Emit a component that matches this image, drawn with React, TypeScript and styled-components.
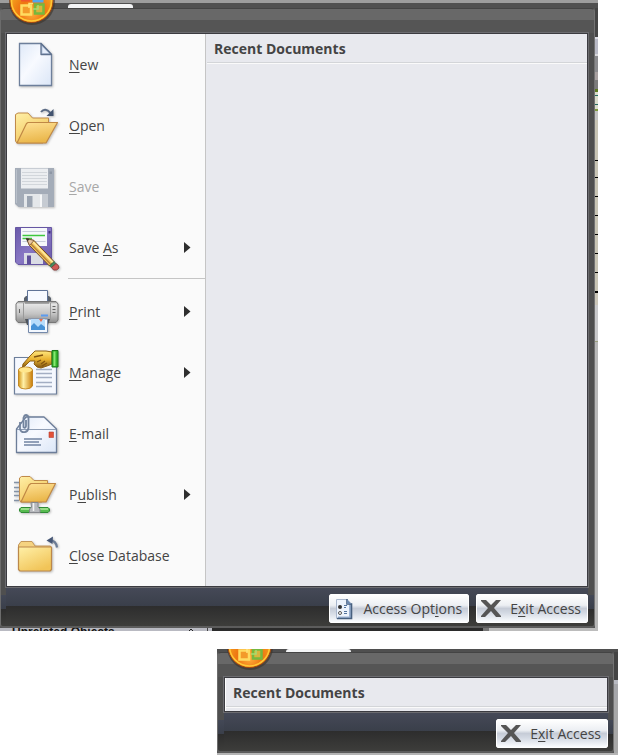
import React from "react";
import styled, { createGlobalStyle } from "styled-components";

const GlobalStyle = createGlobalStyle`
  *, *::before, *::after { box-sizing: border-box; }
  body {
    margin: 0;
    background: #fff;
    color: #444;
    font: 400 14px/20px "Open Sans", "Noto Sans", sans-serif;
  }
`;

const Page = styled.main`
  display: flex;
  flex-direction: column;
  gap: 18px;
`;

const Backdrop = styled.section<{ $small?: boolean }>`
  position: relative;
  overflow: hidden;
  display: grid;
  grid-template-columns: minmax(0, 1fr) ${(p) => (p.$small ? 4 : 3)}px;
  grid-template-rows: ${(p) => (p.$small ? "3px auto 2px" : "8px auto 3px")};
  margin-left: ${(p) => (p.$small ? 217 : 0)}px;
  margin-right: ${(p) => (p.$small ? 0 : 20)}px;
  background: #555;
`;

const TitleStrip = styled.div<{ $small?: boolean }>`
  grid-column: 1 / -1;
  display: flex;
  align-items: flex-end;
  padding-left: ${(p) => (p.$small ? 69 : 68)}px;
  background: ${(p) =>
    p.$small ? "#4f4f4f" : "linear-gradient(#9d9d9d 0 3px, #505050 3px 8px)"};
`;

const RibbonTab = styled.div<{ $small?: boolean }>`
  width: 65px;
  height: ${(p) => (p.$small ? 3 : 4)}px;
  border-radius: 3px 3px 0 0;
  background: #f4f5f6;
`;

const SideStrip = styled.div<{ $small?: boolean }>`
  background: ${(p) =>
    p.$small
      ? "linear-gradient(#444 0 28px, #b8bac2 28px 32px, #a5a6aa 32px 48px, #a8a8a8 48px)"
      : `linear-gradient(
          #454545 0 29px, #dcdce4 29px 31px, #b9bac6 31px 46px, #d8d8dc 46px 48px,
          #8b8b8e 48px 64px, #a8a0a0 64px 72px, #7c7c7c 72px 81px,
          #5c7a20 81px 84px, #d9dccb 84px 87px, #246a60 87px 88px, #d9dccb 88px 96px,
          #246a60 96px 97px, #d9dccb 97px 101px, #7e9a3c 101px 103px, #c2c2c2 103px 112px,
          #c8c4b4 112px 152px, #000 152px 153px, #c8c4b4 153px 169px, #000 169px 170px,
          #c8c4b4 170px 188px, #000 188px 189px, #c8c4b4 189px 207px, #000 207px 208px,
          #c8c4b4 208px 226px, #000 226px 227px, #c8c4b4 227px 245px, #000 245px 246px,
          #c8c4b4 246px 264px, #000 264px 265px, #c8c4b4 265px 283px, #000 283px 285px,
          #cbc6b8 285px 297px, #c9c9cb 297px 333px, #9ba07e 333px 334px, #b8b8b8 334px)`};
`;

const BottomStrip = styled.div<{ $small?: boolean }>`
  grid-column: 1 / -1;
  display: flex;
  overflow: hidden;
  background: ${(p) =>
    p.$small
      ? "#b4b4b4"
      : "linear-gradient(90deg, #b9bac2 0 207px, #444 207px 208px, #b9bac2 208px 212px, #2b2b2b 212px 483px, #777 483px 489px, #bcbcbc 489px)"};
`;

const ObjectsLabel = styled.span`
  flex: none;
  padding-left: 12px;
  color: #111;
  font: 700 12px/8px "Liberation Sans", sans-serif;
  white-space: nowrap;
`;

const Chevron = styled.svg`
  flex: none;
  margin-left: 73px;
`;

const Orb = styled.svg<{ $small?: boolean }>`
  position: absolute;
  left: ${(p) => (p.$small ? 10 : 9)}px;
  top: ${(p) => (p.$small ? -4 : 0)}px;
`;

const Panel = styled.div<{ $small?: boolean }>`
  display: flex;
  flex-direction: column;
  min-width: 0;
  padding: ${(p) => (p.$small ? "0 5px 0 6px" : "0 6px 0 5px")};
  border: 1px solid;
  border-color: #444 #737373 #5c5c5c #6c6c6c;
  border-bottom-width: 2px;
  border-radius: 4px;
  background:
    linear-gradient(#434856, #3a3f4a 14px, #2d2d2d 14px, #3d3d3b) bottom / 100% 31px no-repeat,
    linear-gradient(#686868 0 11px, #555 11px 24px, #4f4f4f 24px);
`;

const Frame = styled.div<{ $small?: boolean }>`
  display: grid;
  grid-template-columns: ${(p) =>
    p.$small ? "minmax(0, 1fr)" : "199px minmax(0, 1fr)"};
  margin-top: 24px;
  border: 1px solid #3b3b40;
  outline: 1px solid #6c6c70;
  background: #e8e9ee;
`;

const Menu = styled.nav`
  display: flex;
  flex-direction: column;
  border-right: 1px solid #c5c5c5;
  background: #fafafa;
`;

const MenuItem = styled.button`
  display: grid;
  grid-template-columns: 48px minmax(0, 1fr) 7px;
  align-items: center;
  column-gap: 9px;
  height: 61px;
  padding: 0 14px 0 5px;
  border: 0;
  background: none;
  color: #444;
  font: inherit;
  text-align: left;

  &:disabled { color: #a8a8a8; }
  &:hover:enabled { background: #ffecb5; }
`;

const Label = styled.span`
  white-space: nowrap;
`;

const AccessKey = styled.span`
  text-decoration: underline;
  text-underline-offset: 2px;
  text-decoration-thickness: 1px;
`;

const Separator = styled.hr`
  align-self: stretch;
  height: 3px;
  margin: 0 0 0 61px;
  border: 0;
  border-top: 1px solid #c5c5c5;
`;

const Recent = styled.section<{ $small?: boolean }>`
  margin-left: ${(p) => (p.$small ? 0 : 1)}px;
  border-left: ${(p) => (p.$small ? "1px solid #fff" : 0)};
  padding-bottom: ${(p) => (p.$small ? 4 : 0)}px;
`;

const RecentTitle = styled.h2`
  margin: 0;
  padding: 5px 0 3px 7px;
  border-bottom: 1px solid #d3d5d8;
  box-shadow: 0 1px 0 #fafafa;
  color: #444;
  font-weight: 700;
  font-size: 14px;
  line-height: 20px;
`;

const Footer = styled.footer`
  display: flex;
  justify-content: flex-end;
  gap: 7px;
  margin-top: 1px;
  padding: 6px 0 3px;
  background: linear-gradient(#454957, #3a3f4a 18px, #2d2d2d 18px, #3d3d3b);
`;

const FooterButton = styled.button`
  display: flex;
  align-items: center;
  gap: 8px;
  height: 29px;
  padding: 0 6px 0 3px;
  border: 1px solid #fff;
  border-radius: 2px;
  background: linear-gradient(#fff, #eceff3 38%, #c6ccd7 50%, #d3d9e3 66%, #fbfdff);
  color: #444;
  font: inherit;
  white-space: nowrap;
`;

function Keyed({ text, at }: { text: string; at: number }) {
  return (
    <Label>
      {text.slice(0, at)}
      <AccessKey>{text[at]}</AccessKey>
      {text.slice(at + 1)}
    </Label>
  );
}

const Icon = styled.svg.attrs({ width: 48, height: 48, viewBox: "0 0 48 48", "aria-hidden": true })`
  display: block;
  filter: drop-shadow(1px 1px 1px rgba(0, 0, 0, 0.25));
`;

const NewIcon = () => (
  <Icon>
    <defs>
      <linearGradient id="page" x1="0" y1="0" x2="1" y2="1">
        <stop offset="0" stopColor="#dfe9f8" />
        <stop offset=".45" stopColor="#f8faff" />
        <stop offset="1" stopColor="#dbe6f7" />
      </linearGradient>
    </defs>
    <path d="M7.500 2.500H29L39.500 13.500V44.500H7.500Z" fill="url(#page)" stroke="#6d7f9b" strokeWidth="1.300" />
    <path d="M29 2.500V13.500H39.500Z" fill="#b8c6dc" stroke="#5f728f" strokeWidth="1.300" strokeLinejoin="round" />
    <path d="M30.500 6V12H36.500Z" fill="#e6eefb" />
  </Icon>
);

const OpenIcon = () => (
  <Icon>
    <defs>
      <linearGradient id="folder" x1="0" y1="0" x2=".6" y2="1">
        <stop offset="0" stopColor="#fff0a8" />
        <stop offset="1" stopColor="#f1c458" />
      </linearGradient>
      <linearGradient id="flap" x1="0" y1="0" x2=".3" y2="1">
        <stop offset="0" stopColor="#ffe296" />
        <stop offset="1" stopColor="#eab74b" />
      </linearGradient>
    </defs>
    <path d="M3.500 12.500L6 11H16L20.500 16H36.500V22L31 41H5L3.500 39Z" fill="url(#folder)" stroke="#c08a4a" strokeLinejoin="round" />
    <path d="M5 41L14.500 21.500L16 20.500H45.500L34 41Z" fill="url(#flap)" stroke="#c08845" strokeWidth="1.200" strokeLinejoin="round" />
    <path d="M29 10Q33 5 38.500 11" fill="none" stroke="#5b6b85" strokeWidth="2" />
    <path d="M41.500 7V14H34.500Z" fill="#435470" />
  </Icon>
);

const SaveIcon = () => (
  <Icon>
    <path d="M3 5H42V44H6.500L3 41Z" fill="#a4acb8" />
    <path d="M4.500 6.500V40" stroke="#b9c0ca" />
    <path d="M9 5.500H36V25.500H9Z" fill="#eceef1" />
    <path d="M10 9.500H35M10 12.500H35M10 15.500H35M10 18.500H35M10 21.500H35" stroke="#d2d6db" />
    <path d="M37.500 8.500H40V11H37.500Z" fill="#8e97a5" />
    <path d="M12 31H36V44H12Z" fill="#e4e7ea" />
    <path d="M15 33H20.500V44H15Z" fill="#9ba4b1" />
    <path d="M28 32H30V44H28Z" fill="#f6f7f8" />
    <path d="M30 31H36V44H30Z" fill="#c6cbd2" />
  </Icon>
);

const SaveAsIcon = () => (
  <Icon>
    <defs>
      <linearGradient id="disk" x1="0" y1="0" x2="1" y2="1">
        <stop offset="0" stopColor="#6a5aaa" />
        <stop offset=".5" stopColor="#8877c4" />
        <stop offset="1" stopColor="#6857a6" />
      </linearGradient>
    </defs>
    <path d="M3.500 3.500H39.500V40.500H6L3.500 38Z" fill="url(#disk)" stroke="#6656a3" />
    <path d="M9 4H35V22H9Z" fill="#f6f8fb" />
    <path d="M10.500 7.500H33.500M10.500 17.500H33.500" stroke="#c8cdda" />
    <path d="M10.500 11.500H33M10.500 14.500H20" stroke="#3fc83f" strokeWidth="1.600" />
    <path d="M36.500 7H38.500V9.500H36.500Z" fill="#40317b" />
    <path d="M12 29H31V40H12Z" fill="#dadce5" />
    <path d="M15 31.500H19V40H15Z" fill="#5e4e9a" />
    <path d="M14.500 14.500L22 16.500L42 37.500L37.500 42L17.500 21.500Z" fill="#f2c75e" stroke="#6e4a29" />
    <path d="M19 20L38.500 40" stroke="#b9823a" strokeWidth="1.500" />
    <path d="M21 18L41 38.500" stroke="#ffeaa0" strokeWidth="1.500" />
    <path d="M14.500 14.500L22 16.500L17.500 21.500Z" fill="#e9c6a1" stroke="#76502f" strokeWidth=".8" />
    <path d="M14 14L17.500 15L15.500 17.500Z" fill="#333" />
    <path d="M37.500 42L42 37.500L44 39.500L39.500 43.500Z" fill="#478b5e" stroke="#29543b" strokeWidth=".6" />
    <path d="M39.500 43.500L44 39.500Q47.500 41.500 47 44Q45 47 41.500 46Z" fill="#d15a56" stroke="#7a3735" strokeWidth=".8" />
  </Icon>
);

const PrintIcon = () => (
  <Icon>
    <defs>
      <linearGradient id="printer" x1="0" y1="0" x2="0" y2="1">
        <stop offset="0" stopColor="#8c8c8c" />
        <stop offset=".12" stopColor="#e6e6e6" />
        <stop offset=".6" stopColor="#c2c2c2" />
        <stop offset="1" stopColor="#8c8c8c" />
      </linearGradient>
    </defs>
    <path d="M12 14V10L14 8H37L39 10V14Z" fill="#59616c" />
    <path d="M15.500 14V2.500H35.500V14Z" fill="#f6f9ff" stroke="#5f7397" />
    <path d="M6 13.500H44L46 16V32L44 34.500H6L4 32V16Z" fill="url(#printer)" stroke="#777" />
    <path d="M11.500 15V33M38.500 15V33" stroke="#9a9a9a" />
    <path d="M13 15H37" stroke="#777" />
    <path d="M40.500 18.500H43.500M40.500 21.500H43.500M40.500 24.500H43.500M7.500 21V25" stroke="#676767" />
    <path d="M29 27.500H36" stroke="#5c9bef" strokeWidth="2" />
    <path d="M13 31H38L36 37H15Z" fill="#50555c" />
    <path d="M16.500 31V44.500H35.500V31Z" fill="#f3f8ff" stroke="#7489aa" />
    <path d="M19 31H33V42H19Z" fill="#b7dcfb" />
    <path d="M27 31H31L29 34Z" fill="#e96c4b" />
    <path d="M19 42V38L22 35L26 39L29 36L33 39V42Z" fill="#4792d7" />
  </Icon>
);

const ManageIcon = () => (
  <Icon>
    <defs>
      <linearGradient id="cylinder">
        <stop offset="0" stopColor="#d49619" />
        <stop offset=".35" stopColor="#fff1a8" />
        <stop offset="1" stopColor="#cb7e09" />
      </linearGradient>
      <linearGradient id="hand" x1="0" y1="0" x2="0" y2="1">
        <stop offset="0" stopColor="#ffe77e" />
        <stop offset=".5" stopColor="#e9b230" />
        <stop offset="1" stopColor="#7e5312" />
      </linearGradient>
    </defs>
    <path d="M2.500 8.500H44.500V45H2.500Z" fill="#f5f8fe" stroke="#6d7f9b" strokeWidth="1.200" />
    <path d="M24 20.500H40M24 24.500H40M24 28.500H40M24 33.500H40M24 37.500H40" stroke="#a3aec3" strokeWidth="1.400" />
    <path d="M6.500 21Q7 18 13.500 18Q20 18 20.500 21V37Q19 40 13.500 40Q8 40 6.500 37Z" fill="url(#cylinder)" stroke="#b9780e" strokeWidth=".8" />
    <ellipse cx="13.500" cy="21" rx="6.500" ry="2.500" fill="#ffe68c" />
    <path d="M11 15L18 7L23 2H34L40 3V15L35 17L32 18L29 19L25 18L22 15L23 12L18 12L13 17L10.500 18Z" fill="url(#hand)" stroke="#8e6014" strokeLinejoin="round" />
    <path d="M22 8L31 6M25 13L29 11M29 15L33 12M30 17L35 14" fill="none" stroke="#825410" strokeWidth="1.300" />
    <path d="M40 1.500H46V18H40Z" fill="#35b12a" stroke="#18791a" />
    <path d="M42.500 2.500V17" stroke="#86e771" strokeWidth="2" />
  </Icon>
);

const EmailIcon = () => (
  <Icon>
    <path d="M4.500 19L14 7H32L44.500 19V42.500H4.500Z" fill="url(#page)" stroke="#6c7d99" strokeWidth="1.300" strokeLinejoin="round" />
    <path d="M5 19.500H44" stroke="#8e9db5" />
    <path d="M37 22H41.500V27.500H37Z" fill="#e25137" stroke="#b93f30" strokeWidth=".6" />
    <path d="M12 29H30M12 32H27M12 35H29" stroke="#7184a3" strokeWidth="1.400" />
    <path d="M8 12V19Q9 23 13 22Q16 21.500 16.500 18V7Q15 4 12.500 5.500L11.500 8V17Q13.500 19 14 16V10" fill="none" stroke="#73849e" strokeWidth="1.800" />
  </Icon>
);

const PublishIcon = () => (
  <Icon>
    <path d="M2 11.500H7M2 16.500H7M2 20.500H7M2 24.500H7M2 29.500H7" stroke="#8492a6" strokeWidth="1.600" />
    <path d="M7.500 7L9.500 5.500H18L22 9.500H35.500V16L30 31H9L7.500 29Z" fill="url(#folder)" stroke="#c08a4a" strokeLinejoin="round" />
    <path d="M9 31L17 14L19 12.500H43.500L34 31Z" fill="url(#flap)" stroke="#c08845" strokeWidth="1.200" strokeLinejoin="round" />
    <path d="M9 36.500H36L37.500 38V40L36 41.500H9L7.500 40V38Z" fill="#57bb50" stroke="#2f8a34" />
    <path d="M9 38H36" stroke="#baf2a5" strokeWidth="1.300" />
    <path d="M19 31.500H26V36L28 38V41.500H17.500V38L19.500 36Z" fill="#b7b9bd" stroke="#85878c" />
    <path d="M21.500 32V40" stroke="#f1f1f1" strokeWidth="1.500" />
  </Icon>
);

const CloseIcon = () => (
  <Icon>
    <path d="M6.500 13L9 9.500H20L23 14H38.500V20H6.500Z" fill="#f5d381" stroke="#c4985a" strokeLinejoin="round" />
    <path d="M6.500 15H39.500V37.500L38 39H8L6.500 37.500Z" fill="url(#folder)" stroke="#bb884a" strokeWidth="1.200" strokeLinejoin="round" />
    <path d="M37 8.500Q44 8 45 15.500" fill="none" stroke="#6c7c96" strokeWidth="2.200" />
    <path d="M34.500 8.500L41 4.500L40.500 12Z" fill="#455675" />
  </Icon>
);

const Arrow = () => (
  <svg width="7" height="12" viewBox="0 0 7 12" aria-hidden="true">
    <path d="M0 0L6.500 5.500L0 11Z" fill="#2e2e2e" />
  </svg>
);

const OptionsIcon = () => (
  <svg width="22" height="24" viewBox="0 0 22 24" aria-hidden="true">
    <path d="M3.500 2.500H14L18.500 7V21.500H3.500Z" fill="#edf3fc" stroke="#a9b7cd" />
    <path d="M17 7V20.500H5" fill="none" stroke="#9db3d4" strokeWidth="2" />
    <path d="M14 2V7H18.500V21.500H4" fill="none" stroke="#47607f" strokeWidth="1.600" />
    <path d="M14 2.500V7H18.500Z" fill="#6d88ae" />
    <circle cx="7" cy="10" r="2" fill="#333" />
    <circle cx="7" cy="16" r="1.500" fill="#fff" stroke="#555" />
    <path d="M11 8.500H14M11 10.500H13M11 14.500H14M11 16.500H14" stroke="#53749f" />
  </svg>
);

const ExitIcon = () => (
  <svg width="22" height="22" viewBox="0 0 22 22" aria-hidden="true">
    <path d="M1 2H6L11 7L16 2H21L14 10L21 18V19H16L11 13L5 19H1V18L8 10L1 3Z" fill="#555" />
  </svg>
);

const OfficeOrb = ({ small }: { small?: boolean }) => (
  <Orb $small={small} width="48" height="28" viewBox="0 0 48 28" role="img" aria-label="Office Button">
    <defs>
      <radialGradient id="orb" cx=".5" cy=".78" r=".65">
        <stop offset="0" stopColor="#ffb03b" />
        <stop offset=".45" stopColor="#ee7411" />
        <stop offset=".8" stopColor="#f39a1c" />
        <stop offset="1" stopColor="#ffd34a" />
      </radialGradient>
    </defs>
    <circle cx="23" cy="2" r="23" fill="#3b3229" opacity=".6" />
    <circle cx="22.500" cy="1" r="21.500" fill="url(#orb)" stroke="#a9480b" />
    <circle cx="22.500" cy="1" r="20" fill="none" stroke="#ffc936" strokeWidth="1.500" />
    <path d="M12 -3H21V1.500H12Z" fill="#f0572c" />
    <path d="M25 -6H33V1H25Z" fill="none" stroke="#51a8ee" strokeWidth="3" />
    <path d="M12.500 5.500H22V14.500H12.500Z" fill="#f39b2a" stroke="#ffdc60" strokeWidth="2.500" />
    <path d="M26 4.500H34.500V13.500H26Z" fill="#d8b53c" stroke="#76b83e" strokeWidth="2.500" />
    <path d="M20 8V3.500H24" fill="none" stroke="#ffe27a" strokeWidth="1.500" />
    <path d="M24 9H29V5" fill="none" stroke="#a7dc70" strokeWidth="1.500" />
  </Orb>
);

const items = [
  { text: "New", at: 0, Art: NewIcon },
  { text: "Open", at: 0, Art: OpenIcon },
  { text: "Save", at: 0, Art: SaveIcon, disabled: true },
  { text: "Save As", at: 5, Art: SaveAsIcon, more: true, rule: true },
  { text: "Print", at: 0, Art: PrintIcon, more: true },
  { text: "Manage", at: 0, Art: ManageIcon, more: true },
  { text: "E-mail", at: 0, Art: EmailIcon },
  { text: "Publish", at: 1, Art: PublishIcon, more: true },
  { text: "Close Database", at: 0, Art: CloseIcon },
];

const ExitButton = () => (
  <FooterButton type="button">
    <ExitIcon />
    <Keyed text="Exit Access" at={1} />
  </FooterButton>
);

export default function App() {
  return (
    <>
      <GlobalStyle />
      <Page>
        <Backdrop>
          <TitleStrip>
            <RibbonTab />
          </TitleStrip>
          <Panel>
            <Frame>
              <Menu aria-label="Office menu">
                {items.map(({ text, at, Art, disabled, more, rule }) => (
                  <React.Fragment key={text}>
                    <MenuItem type="button" disabled={disabled}>
                      <Art />
                      <Keyed text={text} at={at} />
                      {more && <Arrow />}
                    </MenuItem>
                    {rule && <Separator />}
                  </React.Fragment>
                ))}
              </Menu>
              <Recent>
                <RecentTitle>Recent Documents</RecentTitle>
              </Recent>
            </Frame>
            <Footer>
              <FooterButton type="button">
                <OptionsIcon />
                <Keyed text="Access Options" at={10} />
              </FooterButton>
              <ExitButton />
            </Footer>
          </Panel>
          <SideStrip />
          <BottomStrip>
            <ObjectsLabel>Unrelated Objects</ObjectsLabel>
            <Chevron width="6" height="4" viewBox="0 0 6 4" aria-hidden="true">
              <path d="M0 4L3 1L6 4" fill="none" stroke="#222" />
            </Chevron>
          </BottomStrip>
          <OfficeOrb />
        </Backdrop>
        <Backdrop $small>
          <TitleStrip $small>
            <RibbonTab $small />
          </TitleStrip>
          <Panel $small>
            <Frame $small>
              <Recent $small>
                <RecentTitle>Recent Documents</RecentTitle>
              </Recent>
            </Frame>
            <Footer>
              <ExitButton />
            </Footer>
          </Panel>
          <SideStrip $small />
          <BottomStrip $small />
          <OfficeOrb small />
        </Backdrop>
      </Page>
    </>
  );
}
